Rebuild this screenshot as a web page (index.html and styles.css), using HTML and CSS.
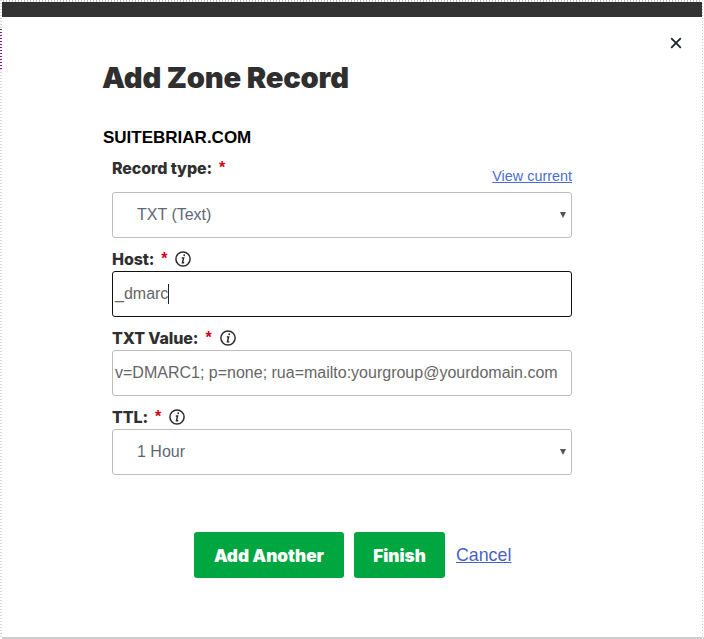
FILE: index.html
```html
<!DOCTYPE html>
<html lang="en">
  <head>
    <meta charset="UTF-8" />
    <title>Add Zone Record</title>
    <link rel="stylesheet" href="styles.css">
  </head>
  <body>
    <div class="modal">
      <div class="modal-bar"></div>
      <div class="modal-body">
        <button class="close" aria-label="Close">
          <svg width="12" height="12" viewBox="0 0 12 12"><path d="M1.2 1.2 10.8 10.8M10.8 1.2 1.2 10.8" stroke="#1f2a33" stroke-width="1.9" fill="none" /></svg>
        </button>
        <h1 class="title">Add Zone Record</h1>
        <div class="domain">SUITEBRIAR.COM</div>
        <form class="form">
          <div class="label-row label-row-first">
            <span class="label">Record type:</span>
            <span class="star">*</span>
            <a class="view-current" href="#">View current</a>
          </div>
          <div class="field field-select">TXT (Text)</div>

          <div class="label-row">
            <span class="label">Host:</span>
            <span class="star">*</span>
            <svg class="info" width="16" height="16" viewBox="0 0 16 16"><circle cx="8" cy="8" r="7.1" fill="none" stroke="#2b2b2b" stroke-width="1.5" /><path d="M9.4 3.4 9.1 5.1M6.8 6.9H8.6L7.5 11.7H9.2" stroke="#2b2b2b" stroke-width="1.5" fill="none" /></svg>
          </div>
          <div class="field field-focus"><span class="caret">_dmarc</span></div>

          <div class="label-row">
            <span class="label">TXT Value:</span>
            <span class="star">*</span>
            <svg class="info" width="16" height="16" viewBox="0 0 16 16"><circle cx="8" cy="8" r="7.1" fill="none" stroke="#2b2b2b" stroke-width="1.5" /><path d="M9.4 3.4 9.1 5.1M6.8 6.9H8.6L7.5 11.7H9.2" stroke="#2b2b2b" stroke-width="1.5" fill="none" /></svg>
          </div>
          <div class="field">v=DMARC1; p=none; rua=mailto:yourgroup@yourdomain.com</div>

          <div class="label-row">
            <span class="label">TTL:</span>
            <span class="star">*</span>
            <svg class="info" width="16" height="16" viewBox="0 0 16 16"><circle cx="8" cy="8" r="7.1" fill="none" stroke="#2b2b2b" stroke-width="1.5" /><path d="M9.4 3.4 9.1 5.1M6.8 6.9H8.6L7.5 11.7H9.2" stroke="#2b2b2b" stroke-width="1.5" fill="none" /></svg>
          </div>
          <div class="field field-select">1 Hour</div>

          <div class="actions">
            <a class="btn btn-wide" href="#">Add Another</a>
            <a class="btn btn-small" href="#">Finish</a>
            <a class="cancel" href="#">Cancel</a>
          </div>
        </form>
      </div>
    </div>
  </body>
</html>
```

FILE: styles.css
```css
* {
  margin: 0;
  padding: 0;
  box-sizing: border-box;
}
html,
body {
  height: 639px;
  overflow: hidden;
}
body {
  padding: 2px 2px 2px 2px;
  font-family: "Liberation Sans", Arial, sans-serif;
  background-color: #fff;
  background-image:
    repeating-linear-gradient(to bottom, #7d1f8a 0 1px, #fff 1px 3px),
    repeating-linear-gradient(to bottom, #d9d9d9 0 1px, #fff 1px 3px),
    repeating-linear-gradient(to bottom, #cfcfcf 0 1px, #fff 1px 3px),
    repeating-linear-gradient(to right, #bdbdbd 0 1px, #fff 1px 3px),
    linear-gradient(#cdcdcd, #cdcdcd);
  background-size: 2px 40px, 2px 100%, 1px 100%, 100% 2px, 100% 2px;
  background-position: 0 29px, 0 0, 702px 0, 0 0, 0 637px;
  background-repeat: no-repeat;
}
.modal {
  height: 635px;
  background-color: #fff;
}
.modal-bar {
  height: 15px;
  background-color: #333;
}
.modal-body {
  position: relative;
  padding: 41px 0 0 101px;
}
.close {
  position: absolute;
  top: 20px;
  right: 20px;
  width: 12px;
  height: 12px;
  border: 0;
  background: none;
  display: block;
}
.close svg {
  display: block;
}
.title {
  margin-left: -1px;
  font-family: Inter, sans-serif;
  font-size: 29.2px;
  line-height: 40px;
  font-weight: 900;
  color: #2f2f2f;
  letter-spacing: -0.2px;
}
.domain {
  margin-top: 30px;
  font-size: 17px;
  line-height: 20px;
  font-weight: bold;
  color: #000;
}
.form {
  width: 460px;
  margin-left: 9px;
}
.label-row {
  height: 33px;
  padding-top: 8px;
  display: flex;
  align-items: center;
  font-family: Inter, sans-serif;
  font-size: 16px;
  line-height: 18px;
  font-weight: 800;
  color: #2f2f2f;
  letter-spacing: -0.1px;
}
.label-row-first {
  height: 44px;
  padding-top: 0;
  padding-bottom: 4px;
}
.star {
  margin-left: 7px;
  color: #d0021b;
  font-family: "Liberation Sans", Arial, sans-serif;
  font-size: 16px;
}
.info {
  margin-left: 8px;
}
.view-current {
  margin-left: auto;
  margin-top: 15px;
  font-family: "Liberation Sans", Arial, sans-serif;
  font-size: 14.4px;
  font-weight: normal;
  letter-spacing: 0;
  color: #4a6ed0;
}
.field {
  position: relative;
  height: 46px;
  padding-left: 2px;
  display: flex;
  align-items: center;
  border: 1px solid #bdbdbd;
  border-radius: 3px;
  font-size: 16px;
  color: #666;
  white-space: nowrap;
}
.field-select {
  padding-left: 24px;
  color: #5d6874;
}
.field-select::after {
  content: "";
  position: absolute;
  right: 5px;
  top: 19px;
  border-style: solid;
  border-width: 6px 3px 0 3px;
  border-color: #555 transparent transparent transparent;
}
.field-focus {
  border-color: #111;
}
.caret {
  border-right: 1px solid #222;
  line-height: 20px;
}
.actions {
  margin-top: 57px;
  margin-left: 82px;
  display: flex;
  align-items: center;
  gap: 10px;
}
.btn {
  height: 46px;
  display: flex;
  align-items: center;
  justify-content: center;
  border-radius: 3px;
  background-color: #00a63f;
  font-family: Inter, sans-serif;
  font-size: 17.2px;
  font-weight: 900;
  color: #fff;
  text-decoration: none;
}
.btn-wide {
  width: 150px;
}
.btn-small {
  width: 91px;
}
.cancel {
  margin-left: 1px;
  font-size: 17.8px;
  color: #4a5fc4;
}
```
